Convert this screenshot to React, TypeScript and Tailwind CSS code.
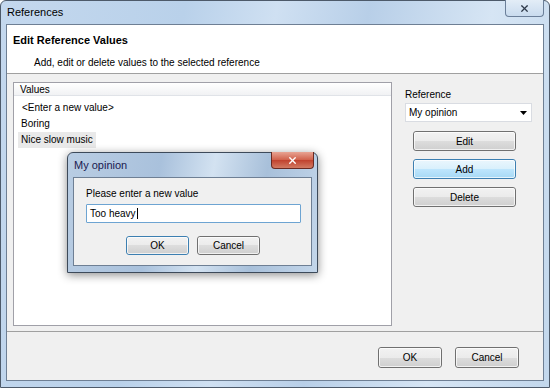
import { X } from 'lucide-react'

const font = "font-['Liberation_Sans',Arial,sans-serif]"

function WinButton({ label, focused = false, className = '' }: { label: string; focused?: boolean; className?: string }) {
  const face = focused
    ? 'border-[#3c7fb1] bg-[linear-gradient(#eaf6fd_0%,#d9f0fc_50%,#bee6fd_50%,#a7d9f5_100%)]'
    : 'border-[#707070] bg-[linear-gradient(#f2f2f2_0%,#ebebeb_50%,#dddddd_50%,#cfcfcf_100%)]'
  return (
    <div className={`flex items-center justify-center rounded-[3px] border text-[10px] text-black ${face} ${className}`}>
      <div className="flex h-full w-full items-center justify-center rounded-[2px] border border-white/70">{label}</div>
    </div>
  )
}

export default function App() {
  const values = ['<Enter a new value>', 'Boring', 'Nice slow music']

  return (
    <div className={`${font} relative h-[388px] w-[550px] overflow-hidden bg-white`}>
      {/* main window frame */}
      <div className="flex h-[388px] w-[550px] flex-col rounded-t-[6px] border border-[#4d5a6a] bg-[linear-gradient(100deg,#c4d8ee_0%,#b9d1ea_30%,#cfe0f2_45%,#b8cfe8_60%,#d6e5f4_80%,#c2d7ec_100%)] px-[5px] pb-[6px]">
        {/* title bar */}
        <div className="relative flex h-[23px] shrink-0 items-center pl-[1px] text-[11px] text-black">
          References
          <div className="absolute right-[0px] top-[-1px] flex h-[17px] w-[39px] items-center justify-center rounded-b-[4px] border border-t-0 border-[#6b7f99] bg-[linear-gradient(#e3edf7,#c9dbee)]">
            <X size={11} strokeWidth={2.6} className="text-[#2e3a4a]" />
          </div>
        </div>

        {/* client area */}
        <div className="flex flex-1 flex-col border border-[#6e7f94] bg-[#f0f0f0]">
          <div className="flex h-[49px] shrink-0 flex-col border-b border-[#a0a0a0] bg-white pl-[6px]">
            <div className="mt-[7px] text-[11px] font-bold text-black">Edit Reference Values</div>
            <div className="mt-[6px] pl-[21px] text-[10px] text-black">Add, edit or delete values to the selected reference</div>
          </div>

          <div className="flex h-[258px] shrink-0 border-b border-[#a0a0a0]">
            {/* list view */}
            <div className="ml-[6px] mt-[8px] flex h-[244px] w-[379px] flex-col border border-[#a0a0a8] bg-white">
              <div className="flex h-[13px] items-center border-b border-[#e0e3e8] bg-[linear-gradient(#ffffff,#f1f2f4)] pl-[6px] text-[10px] text-black">
                Values
              </div>
              <div className="flex flex-col pl-[4px] pt-[4px] text-[10px] text-black">
                {values.map((v, i) => (
                  <div key={v} className="flex h-[16px] items-center">
                    <span className={`px-[3px] leading-[16px] ${i === 2 ? 'bg-[#e9e9e9]' : ''} ${i === 0 ? 'pl-[4px]' : ''}`}>{v}</span>
                  </div>
                ))}
              </div>
            </div>

            {/* right panel */}
            <div className="ml-[13px] mt-[15px] flex w-[127px] flex-col">
              <div className="text-[10px] leading-[12px] text-black">Reference</div>
              <div className="mt-[2px] flex h-[19px] items-center justify-between border border-[#d9dce2] bg-white pl-[3px] pr-[4px] text-[10px] text-black">
                My opinion
                <svg width="7" height="4" viewBox="0 0 7 4">
                  <path d="M0 0h7L3.5 4z" fill="#000" />
                </svg>
              </div>
              <div className="ml-[8px] mt-[9px] flex flex-col gap-[8px]">
                <WinButton label="Edit" className="h-[20px] w-[103px]" />
                <WinButton label="Add" focused className="h-[20px] w-[103px]" />
                <WinButton label="Delete" className="h-[20px] w-[103px]" />
              </div>
            </div>
          </div>

          <div className="flex flex-1 items-start justify-end gap-[13px] pr-[24px] pt-[15px]">
            <WinButton label="OK" className="h-[21px] w-[64px]" />
            <WinButton label="Cancel" className="h-[21px] w-[64px]" />
          </div>
        </div>
      </div>

      {/* "My opinion" prompt dialog */}
      <div className="absolute left-[67px] top-[152px] flex h-[121px] w-[251px] flex-col rounded-t-[6px] border border-[#3d4a5a] bg-[linear-gradient(100deg,#b9cde3_0%,#a9c1dc_35%,#d3e2f1_55%,#a8c0da_75%,#c3d6ea_100%)] px-[5px] pb-[6px] shadow-[0_2px_10px_rgba(0,0,0,0.45)]">
        <div className="relative flex h-[24px] shrink-0 items-center pl-[1px] text-[11px] text-[#1a1a50]">
          My opinion
          <div className="absolute right-[-2px] top-[-1px] flex h-[17px] w-[43px] items-center justify-center rounded-b-[4px] border border-t-0 border-[#6a2a22] bg-[linear-gradient(#e8a493,#d0604a_50%,#c0402c_50%,#d27a62)]">
            <X size={11} strokeWidth={3} className="text-white" />
          </div>
        </div>
        <div className="flex flex-1 flex-col border border-[#6e7f94] bg-[#f0f0f0] pl-[12px]">
          <div className="mt-[10px] text-[10px] leading-[12px] text-black">Please enter a new value</div>
          <div className="mt-[4px] flex h-[19px] w-[215px] items-center rounded-[1px] border border-[#6da4d2] bg-white pl-[3px] text-[10px] text-black">
            Too heavy<span className="ml-[1px] inline-block h-[11px] w-px bg-black" />
          </div>
          <div className="mt-[13px] flex gap-[8px] pl-[40px]">
            <WinButton label="OK" focused className="h-[19px] w-[63px] !border-[#3c7fb1] !bg-[linear-gradient(#f2f2f2_0%,#ebebeb_50%,#dddddd_50%,#cfcfcf_100%)]" />
            <WinButton label="Cancel" className="h-[19px] w-[63px]" />
          </div>
        </div>
      </div>
    </div>
  )
}
